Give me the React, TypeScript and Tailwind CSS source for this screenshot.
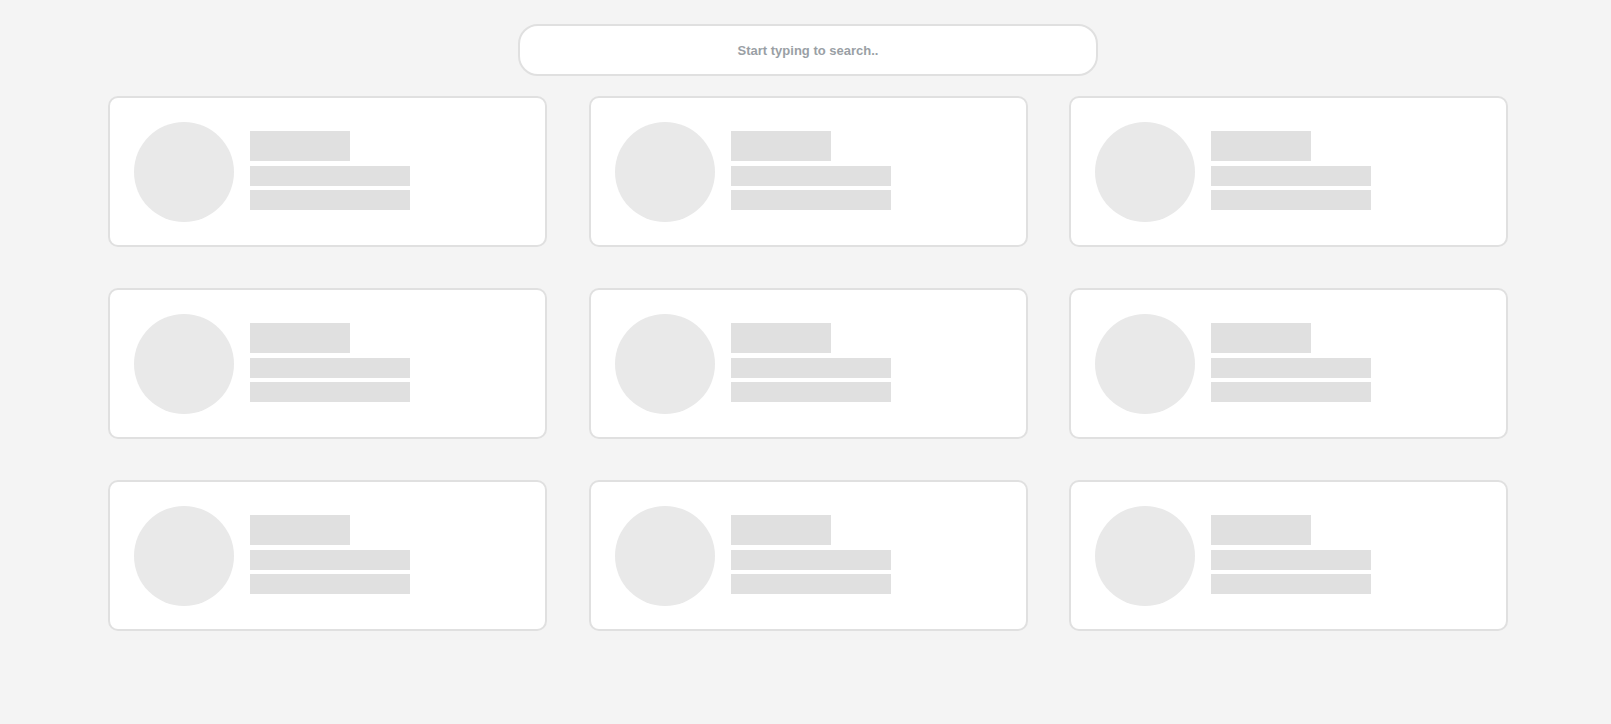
import React from "react";

const SkeletonCard = () => {
    return (
        <div className="flex h-[151px] items-start rounded-[10px] border-2 border-[#e0e0e0] bg-white pl-6 pt-6">
            {/* avatar placeholder */}
            <div className="h-[100px] w-[100px] shrink-0 rounded-full bg-[#e9e9e9]" />
            <div className="ml-4 mt-[9px] flex flex-col">
                <div className="h-[30px] w-[100px] bg-[#e0e0e0]" />
                <div className="mt-[5px] h-[20px] w-[160px] bg-[#e0e0e0]" />
                <div className="mt-[4px] h-[20px] w-[160px] bg-[#e0e0e0]" />
            </div>
        </div>
    );
};

export default function App() {
    const cards = Array.from({ length: 9 }, (_, i) => i);

    return (
        <div className="min-h-screen w-full bg-[#f4f4f4] font-['Liberation_Sans',Arial,sans-serif]">
            <div className="pt-[24px] pl-[518px]">
                <input
                    type="text"
                    placeholder="Start typing to search.."
                    className="h-[52px] w-[580px] rounded-[20px] border-2 border-[#e0e0e0] bg-white text-center text-[13px] font-bold text-[#9a9fa5] outline-none placeholder:text-[#9a9fa5]"
                />
            </div>

            {/* skeleton grid */}
            <div className="ml-[108px] mt-[20px] grid w-[1400px] grid-cols-3 gap-x-[41.5px] gap-y-[41px]">
                {cards.map((i) => (
                    <SkeletonCard key={i} />
                ))}
            </div>
        </div>
    );
}
